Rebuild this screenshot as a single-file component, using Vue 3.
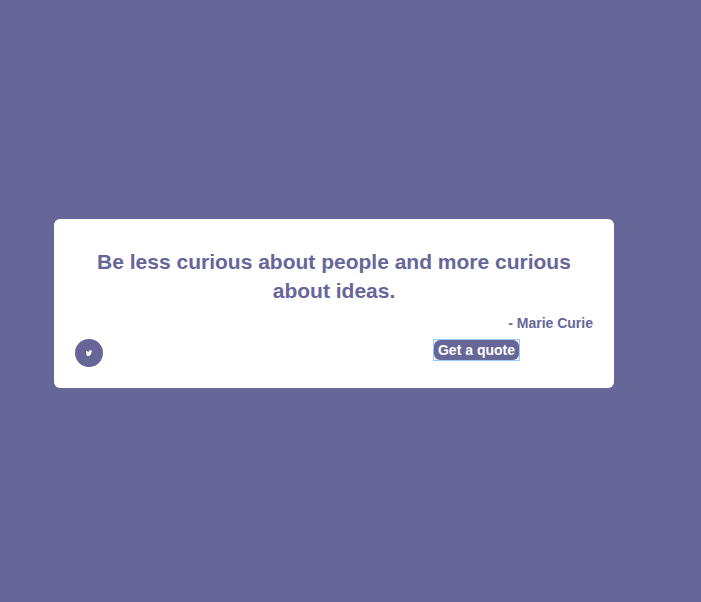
<script setup>
import { ref, computed } from 'vue'

const quotes = [
  { text: 'Be less curious about people and more curious about ideas.', author: 'Marie Curie' },
]
const index = ref(0)
const quote = computed(() => quotes[index.value])

function nextQuote() {
  index.value = (index.value + 1) % quotes.length
}
</script>

<template>
  <main class="page">
    <section class="quote-box">
      <p class="text">{{ quote.text }}</p>
      <p class="author">- {{ quote.author }}</p>
      <div class="actions">
        <a class="tweet" href="#tweet" aria-label="Tweet this quote">
          <svg viewBox="0 0 24 24" width="6" height="6" aria-hidden="true">
            <path
              fill="currentColor"
              d="M24 4l-2 3c0 10-5 17-13 17-4 0-7-1-9-3 2 0 4-.5 5-1.500-3-1-4-3-4-5C0 13 0 9 0 4l2-1c3 3 6 4 10 4 0-4 2-6 5-6 2 0 3 .5 4 1.500L24 1z"
            />
          </svg>
        </a>
        <div class="focus-frame">
          <button class="new-quote" type="button" @click="nextQuote">Get a quote</button>
        </div>
      </div>
    </section>
  </main>
</template>

<style>
body {
  background: #666699;
}
</style>

<style scoped>
.page {
  box-sizing: border-box;
  min-height: 100vh;
  padding: 0 87px 0 54px;
  display: grid;
  align-items: center;
  font-family: "Liberation Sans", Arial, sans-serif;
  font-weight: bold;
  color: #666699;
}

.quote-box {
  margin-top: 5px;
  padding: 28px 21px 21px;
  border-radius: 6px;
  background: #fff;
}

.text {
  margin: 0;
  font-size: 21px;
  line-height: 29px;
  text-align: center;
}

.author {
  margin: 10px 0 7px;
  font-size: 14px;
  line-height: 17px;
  text-align: right;
}

.actions {
  display: flex;
  align-items: flex-start;
  justify-content: space-between;
}

.tweet {
  display: flex;
  align-items: center;
  justify-content: center;
  width: 28px;
  height: 28px;
  border-radius: 50%;
  background: #666699;
  color: #fff;
}

.focus-frame {
  display: flex;
  margin-right: 73px;
  border: 1px solid #99c8ff;
}

.new-quote {
  padding: 2px 4px 1px;
  border: 0;
  border-radius: 6px;
  background: #666699;
  color: #fff;
  font: bold 14px/17px "Liberation Sans", Arial, sans-serif;
  cursor: pointer;
}
</style>
